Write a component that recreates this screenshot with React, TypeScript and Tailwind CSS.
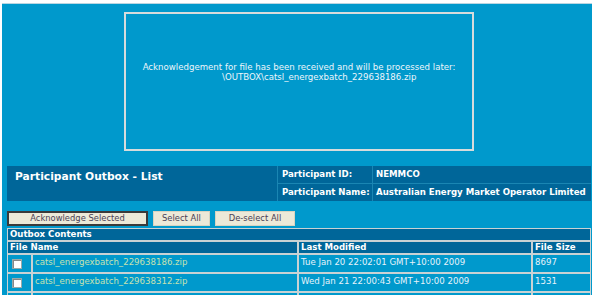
const font = "font-['DejaVu_Sans','Verdana',sans-serif]"

const rows = [
  { name: "catsl_energexbatch_229638186.zip", modified: "Tue Jan 20 22:02:01 GMT+10:00 2009", size: "8697" },
  { name: "catsl_energexbatch_229638312.zip", modified: "Wed Jan 21 22:00:43 GMT+10:00 2009", size: "1531" },
  { name: "", modified: "", size: "" },
]

function Checkbox() {
  return <span className="block w-[10px] h-[10px] bg-white border border-[#9aa] shadow-[inset_1px_1px_0_#888]" />
}

export default function App() {
  return (
    <div className={`w-[594px] h-[295px] overflow-hidden bg-white pt-[3px] px-[2px] ${font}`}>
      <div className="h-[292px] bg-[#0099cc] border-t border-[#b9d6e2] pt-[8px]">
        {/* acknowledgement message */}
        <div className="ml-[122px] w-[350px] h-[139px] border-2 border-[#d6dcdc] pt-[48px] text-[8.6px] leading-[10px] text-[#eef6fb]">
          <div className="text-center whitespace-nowrap">Acknowledgement for file has been received and will be processed later:</div>
          <div className="pl-[96px] whitespace-nowrap">\OUTBOX\catsl_energexbatch_229638186.zip</div>
        </div>

        {/* header */}
        <div className="mt-[15px] ml-[5px] w-[584px] h-[35px] flex text-white font-bold">
          <div className="w-[270px] bg-[#006699] pl-[8px] pt-[3px] text-[10.7px]">Participant Outbox - List</div>
          <div className="flex-1 grid grid-cols-[94px_1fr] grid-rows-2 gap-[1px] bg-[#1a86b3] pl-[1px] text-[8.6px] whitespace-nowrap">
            <div className="bg-[#006699] pl-[4px] flex items-center">Participant ID:</div>
            <div className="bg-[#006699] pl-[3px] flex items-center">NEMMCO</div>
            <div className="bg-[#006699] pl-[4px] flex items-center">Participant Name:</div>
            <div className="bg-[#006699] pl-[3px] flex items-center">Australian Energy Market Operator Limited</div>
          </div>
        </div>

        {/* buttons */}
        <div className="mt-[10px] ml-[5px] flex gap-[5px] text-[8.4px] text-[#4a3f55]">
          <button className="w-[141px] h-[15px] bg-[#ece9d8] border-2 border-[#3a3a3a] leading-none">Acknowledge Selected</button>
          <button className="w-[57px] h-[15px] bg-[#ece9d8] border border-[#d8d4c0] leading-none">Select All</button>
          <button className="w-[80px] h-[15px] bg-[#ece9d8] border border-[#d8d4c0] leading-none">De-select All</button>
        </div>

        {/* outbox table */}
        <div className="mt-[2px] ml-[5px] w-[584px] bg-[#c9d2d4] p-[1px] grid grid-cols-[23px_264px_232px_57px] gap-x-[2px] gap-y-[2px] text-[8.6px] whitespace-nowrap">
          <div className="col-span-4 h-[11px] bg-[#006699] text-white font-bold pl-[2px] leading-[11px]">Outbox Contents</div>
          <div className="col-span-2 h-[11px] bg-[#006699] text-white font-bold pl-[2px] leading-[11px]">File Name</div>
          <div className="h-[11px] bg-[#006699] text-white font-bold pl-[2px] leading-[11px]">Last Modified</div>
          <div className="h-[11px] bg-[#006699] text-white font-bold pl-[2px] leading-[11px]">File Size</div>
          {rows.map((r, i) => (
            <div key={i} className="contents">
              <div className="h-[17px] bg-[#0099cc] pl-[4px] pt-[4px]">{r.name && <Checkbox />}</div>
              <div className="h-[17px] bg-[#0099cc] pl-[2px] pt-[1px] text-[#c6e2b0]">{r.name}</div>
              <div className="h-[17px] bg-[#0099cc] pl-[2px] pt-[1px] text-[#e6f3fb]">{r.modified}</div>
              <div className="h-[17px] bg-[#0099cc] pl-[2px] pt-[1px] text-[#e6f3fb]">{r.size}</div>
            </div>
          ))}
        </div>
      </div>
    </div>
  )
}
